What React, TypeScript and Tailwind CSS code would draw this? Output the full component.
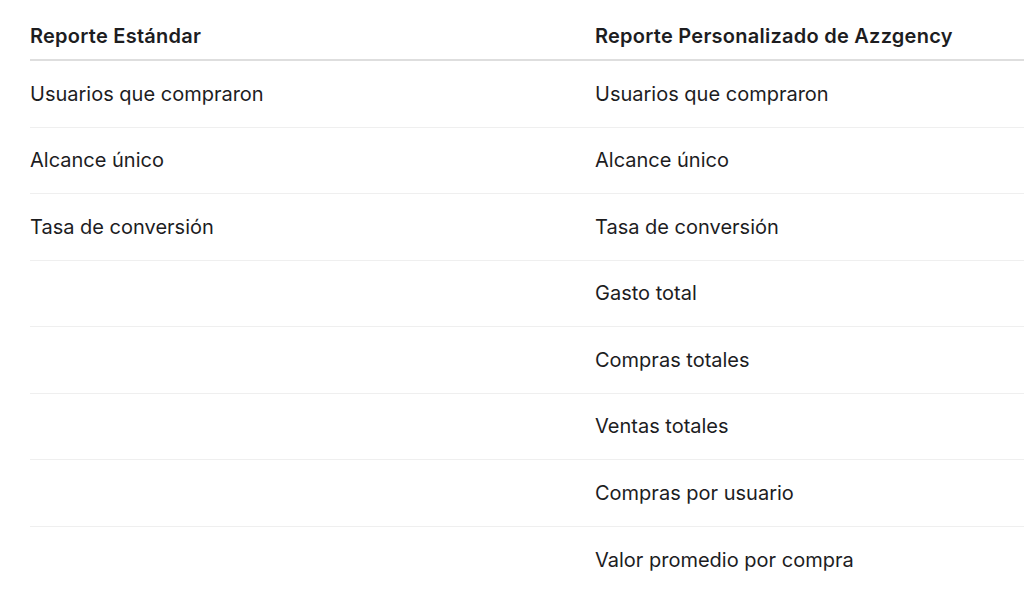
import React from 'react';

const rows: [string, string][] = [
  ['Usuarios que compraron', 'Usuarios que compraron'],
  ['Alcance único', 'Alcance único'],
  ['Tasa de conversión', 'Tasa de conversión'],
  ['', 'Gasto total'],
  ['', 'Compras totales'],
  ['', 'Ventas totales'],
  ['', 'Compras por usuario'],
  ['', 'Valor promedio por compra'],
];

export default function App() {
  return (
    <div className="w-[1024px] h-[598px] overflow-hidden bg-white text-[#1d1d1f] font-['Inter','Noto_Sans',sans-serif]">
      <div className="ml-[30px] w-[1130px]">
        {/* Header */}
        <div className="grid grid-cols-2 h-[61px] pt-[13px] items-center border-b-2 border-[#dedede] text-[20px] font-semibold tracking-[0.25px]">
          <div>Reporte Estándar</div>
          <div>Reporte Personalizado de Azzgency</div>
        </div>

        {/* Rows */}
        {rows.map(([left, right], i) => (
          <div
            key={i}
            className={`grid grid-cols-2 h-[66.5px] items-center text-[20px] ${
              i < rows.length - 1 ? 'border-b border-[#efefef]' : ''
            }`}
          >
            <div>{left}</div>
            <div>{right}</div>
          </div>
        ))}
      </div>
    </div>
  );
}
